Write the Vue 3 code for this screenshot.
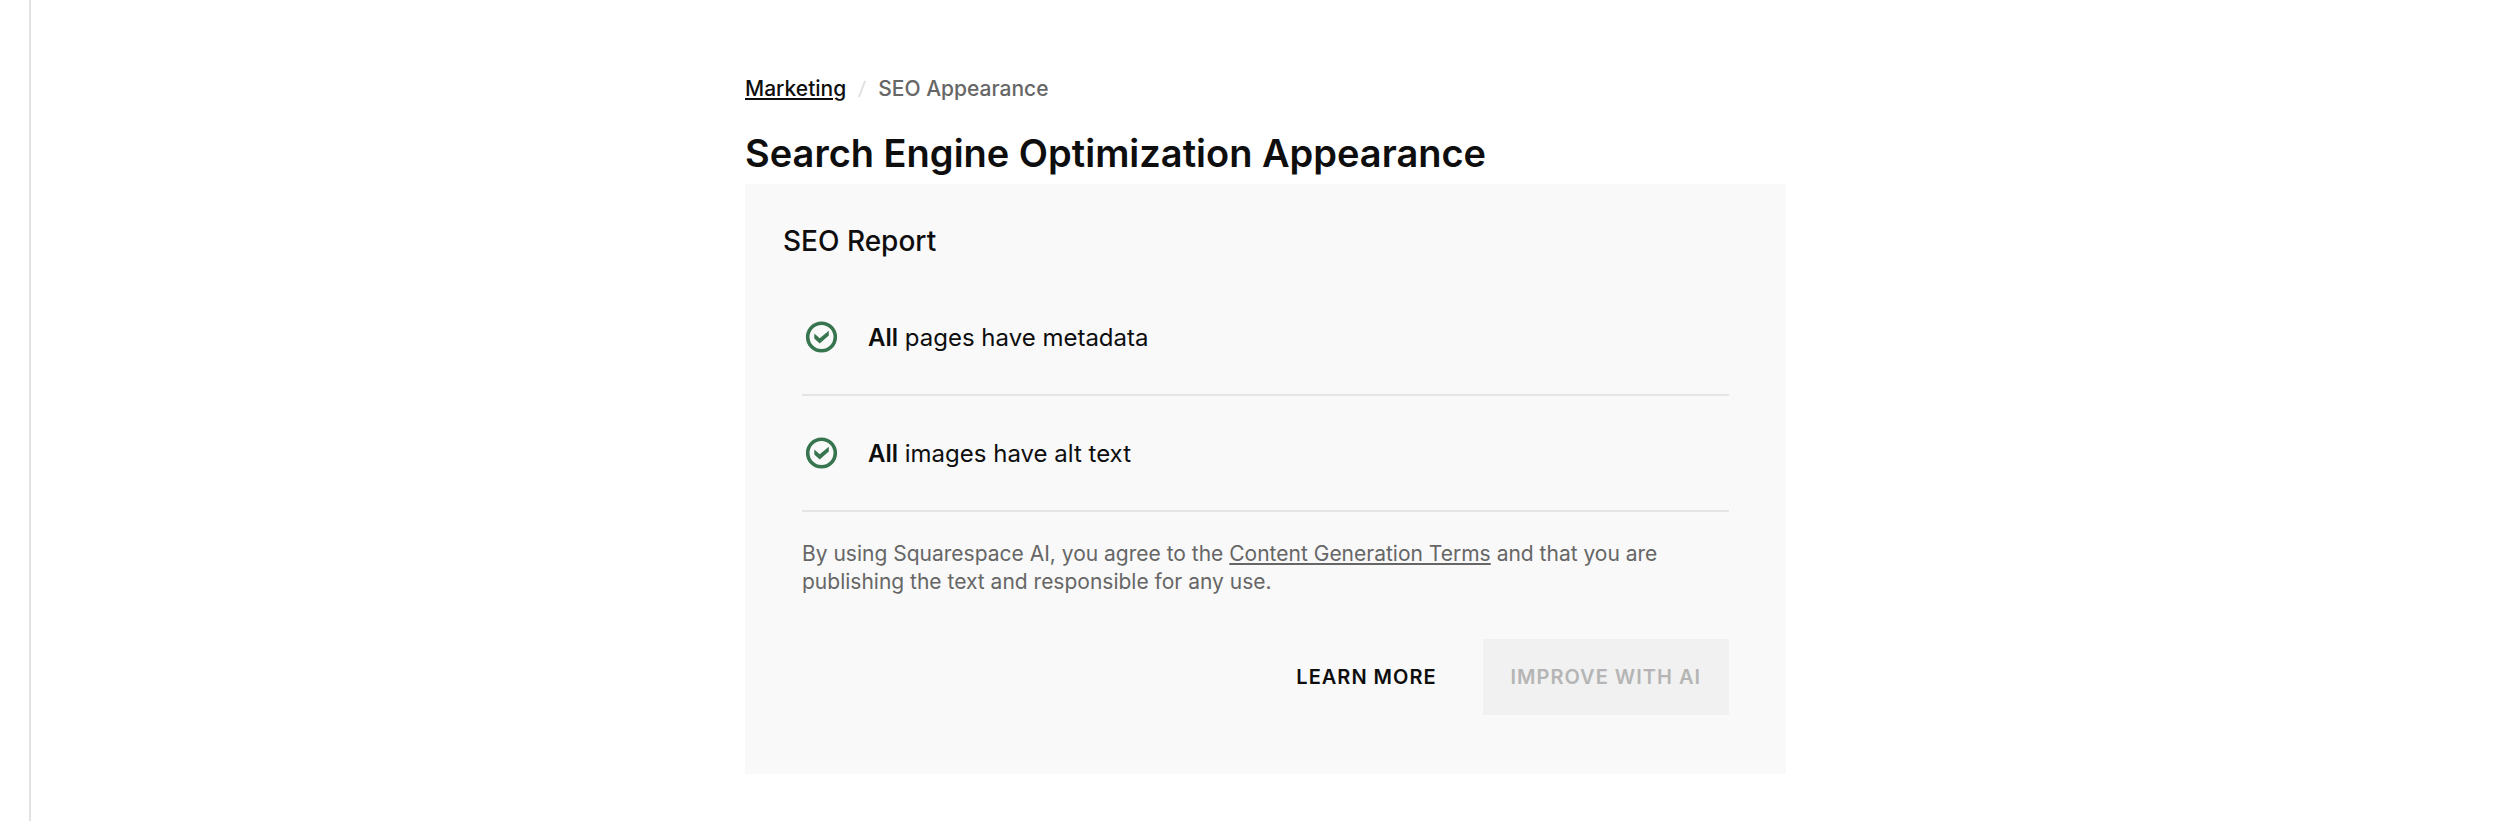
<script setup>
import { ref } from "vue";
const checks = ref([
  { id: 1, amount: "All", label: "pages have metadata" },
  { id: 2, amount: "All", label: "images have alt text" },
]);
const emit = defineEmits(["learn", "improve"]);
const canImprove = ref(false);
</script>
<template>
  <main class="panel">
    <div class="content">
      <nav class="breadcrumb" aria-label="Breadcrumb">
        <a href="#marketing">Marketing</a>
        <svg class="slash" viewBox="0 0 8 18" aria-hidden="true">
          <path d="M7 1L1 17" />
        </svg>
        <span>SEO Appearance</span>
      </nav>
      <h1>Search Engine Optimization Appearance</h1>
      <section class="report">
        <h2>SEO Report</h2>
        <div class="report-body">
          <ul class="checks">
            <li v-for="check in checks" :key="check.id">
              <svg class="check-icon" viewBox="0 0 40 40" aria-hidden="true">
                <circle cx="19.5" cy="20" r="13.8" />
                <path
                  d="M12.3 16.6L17.7 21.2L26.8 13.7V18.6L17.7 26.6L12.3 21.4Z"
                />
              </svg>
              <p>
                <strong>{{ check.amount }}</strong> {{ check.label }}
              </p>
            </li>
          </ul>
          <p class="terms">
            By using Squarespace AI, you agree to the
            <a href="#terms">Content Generation Terms</a> and that you are
            publishing the text and responsible for any use.
          </p>
          <div class="actions">
            <button class="learn" @click="emit('learn')">Learn more</button>
            <button
              class="improve"
              :disabled="!canImprove"
              @click="emit('improve')"
            >
              Improve with AI
            </button>
          </div>
        </div>
      </section>
    </div>
  </main>
</template>
<style>
body {
  margin: 0;
  background-color: white;
}
</style>
<style scoped>
.panel {
  box-sizing: border-box;
  min-height: 100vh;
  margin-left: 29px;
  padding: 73px 24px 46px;
  border-left: 2px solid #e3e3e3;
  font-family: Inter, "Liberation Sans", Arial, sans-serif;
  color: #0e0e0e;
}
.content {
  max-width: 1041px;
  margin: 0 auto;
}
.breadcrumb {
  display: flex;
  align-items: center;
  gap: 12px;
  font-size: 21px;
  line-height: 32px;
  font-weight: 500;
  color: #666;
}
a {
  color: inherit;
  text-decoration-thickness: 2px;
  text-underline-offset: 2px;
}
.breadcrumb a {
  color: #0e0e0e;
}
.slash {
  width: 8px;
  height: 18px;
  fill: none;
  stroke: #e0e0e0;
  stroke-width: 2;
}
h1 {
  margin: 24px 0 7px;
  font-size: 38px;
  line-height: 48px;
  font-weight: 600;
}
.report {
  padding: 38px 38px 59px;
  background-color: #f9f9f9;
}
h2 {
  margin: 0;
  font-size: 28px;
  line-height: 38px;
  font-weight: 500;
}
.report-body {
  padding: 20px 19px 0;
}
.checks {
  margin: 0;
  padding: 0;
  list-style: none;
}
.checks li {
  display: flex;
  align-items: center;
  gap: 26px;
  height: 114px;
  border-bottom: 2px solid #e5e5e5;
  font-size: 24px;
}
.check-icon {
  flex: none;
  width: 40px;
  height: 40px;
  fill: #37754f;
}
.check-icon circle {
  fill: none;
  stroke: #37754f;
  stroke-width: 3.6;
}
p {
  margin: 0;
}
strong {
  font-weight: 600;
}
.terms {
  max-width: 880px;
  padding-top: 28px;
  font-size: 21px;
  line-height: 28px;
  color: #666;
}
.actions {
  display: flex;
  justify-content: flex-end;
  gap: 18px;
  margin-top: 43px;
}
button {
  height: 76px;
  padding: 0 28px;
  border: none;
  background: none;
  font-family: inherit;
  font-size: 20px;
  font-weight: 600;
  letter-spacing: 1px;
  text-transform: uppercase;
  color: #0e0e0e;
}
.improve {
  background-color: #f1f1f1;
  color: #b5b5b5;
}
</style>
